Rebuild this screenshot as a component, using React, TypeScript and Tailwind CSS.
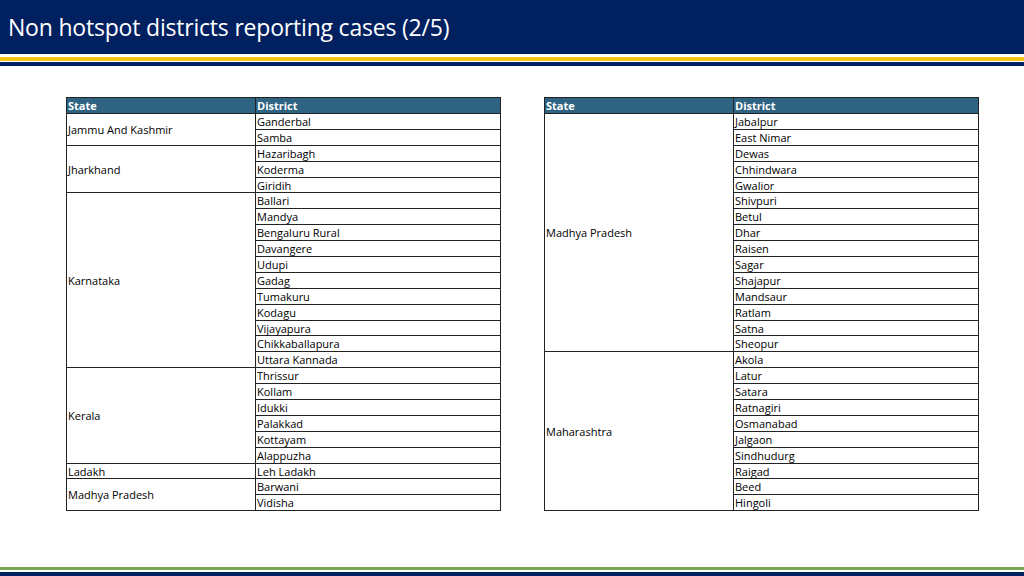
const left: [string, string[]][] = [
  ["Jammu And Kashmir", ["Ganderbal", "Samba"]],
  ["Jharkhand", ["Hazaribagh", "Koderma", "Giridih"]],
  ["Karnataka", ["Ballari", "Mandya", "Bengaluru Rural", "Davangere", "Udupi", "Gadag", "Tumakuru", "Kodagu", "Vijayapura", "Chikkaballapura", "Uttara Kannada"]],
  ["Kerala", ["Thrissur", "Kollam", "Idukki", "Palakkad", "Kottayam", "Alappuzha"]],
  ["Ladakh", ["Leh Ladakh"]],
  ["Madhya Pradesh", ["Barwani", "Vidisha"]],
]
const right: [string, string[]][] = [
  ["Madhya Pradesh", ["Jabalpur", "East Nimar", "Dewas", "Chhindwara", "Gwalior", "Shivpuri", "Betul", "Dhar", "Raisen", "Sagar", "Shajapur", "Mandsaur", "Ratlam", "Satna", "Sheopur"]],
  ["Maharashtra", ["Akola", "Latur", "Satara", "Ratnagiri", "Osmanabad", "Jalgaon", "Sindhudurg", "Raigad", "Beed", "Hingoli"]],
]

function Table({ data }: { data: [string, string[]][] }) {
  return (
    <table className="w-[435px] border-collapse text-[11px] leading-none text-black table-fixed">
      <thead>
        <tr className="h-[16px] bg-[#2e6482] text-white font-bold text-left">
          <th className="w-[189px] border border-[#222] px-[1px]">State</th>
          <th className="border border-[#222] px-[1px]">District</th>
        </tr>
      </thead>
      <tbody>
        {data.map(([s, ds]) =>
          ds.map((d, i) => (
            <tr key={s + d} className="h-[15.9px]">
              {i === 0 && (
                <td rowSpan={ds.length} className="border border-[#222] px-[1px] align-middle">{s}</td>
              )}
              <td className="border border-[#222] px-[1px]">{d}</td>
            </tr>
          ))
        )}
      </tbody>
    </table>
  )
}

export default function App() {
  return (
    <div className="w-[1024px] h-[576px] bg-white flex flex-col" style={{ fontFamily: "'Open Sans', 'Liberation Sans', sans-serif" }}>
      <div className="h-[54px] bg-[#002060] flex items-center px-[8px]">
        <h1 className="text-white text-[23px] tracking-[-0.2px]" style={{ fontFamily: "'Open Sans', sans-serif" }}>Non hotspot districts reporting cases (2/5)</h1>
      </div>
      <div className="h-[3px]" />
      <div className="h-[4px] bg-[#f5c518]" />
      <div className="h-[1px]" />
      <div className="h-[4px] bg-[#002060]" />
      <div className="flex-1 flex gap-[43px] pl-[66px] pt-[31px]">
        <div><Table data={left} /></div>
        <div><Table data={right} /></div>
      </div>
      <div className="h-[3px] bg-[#77a85a]" />
      <div className="h-[2px]" />
      <div className="h-[4px] bg-[#002060]" />
    </div>
  )
}
